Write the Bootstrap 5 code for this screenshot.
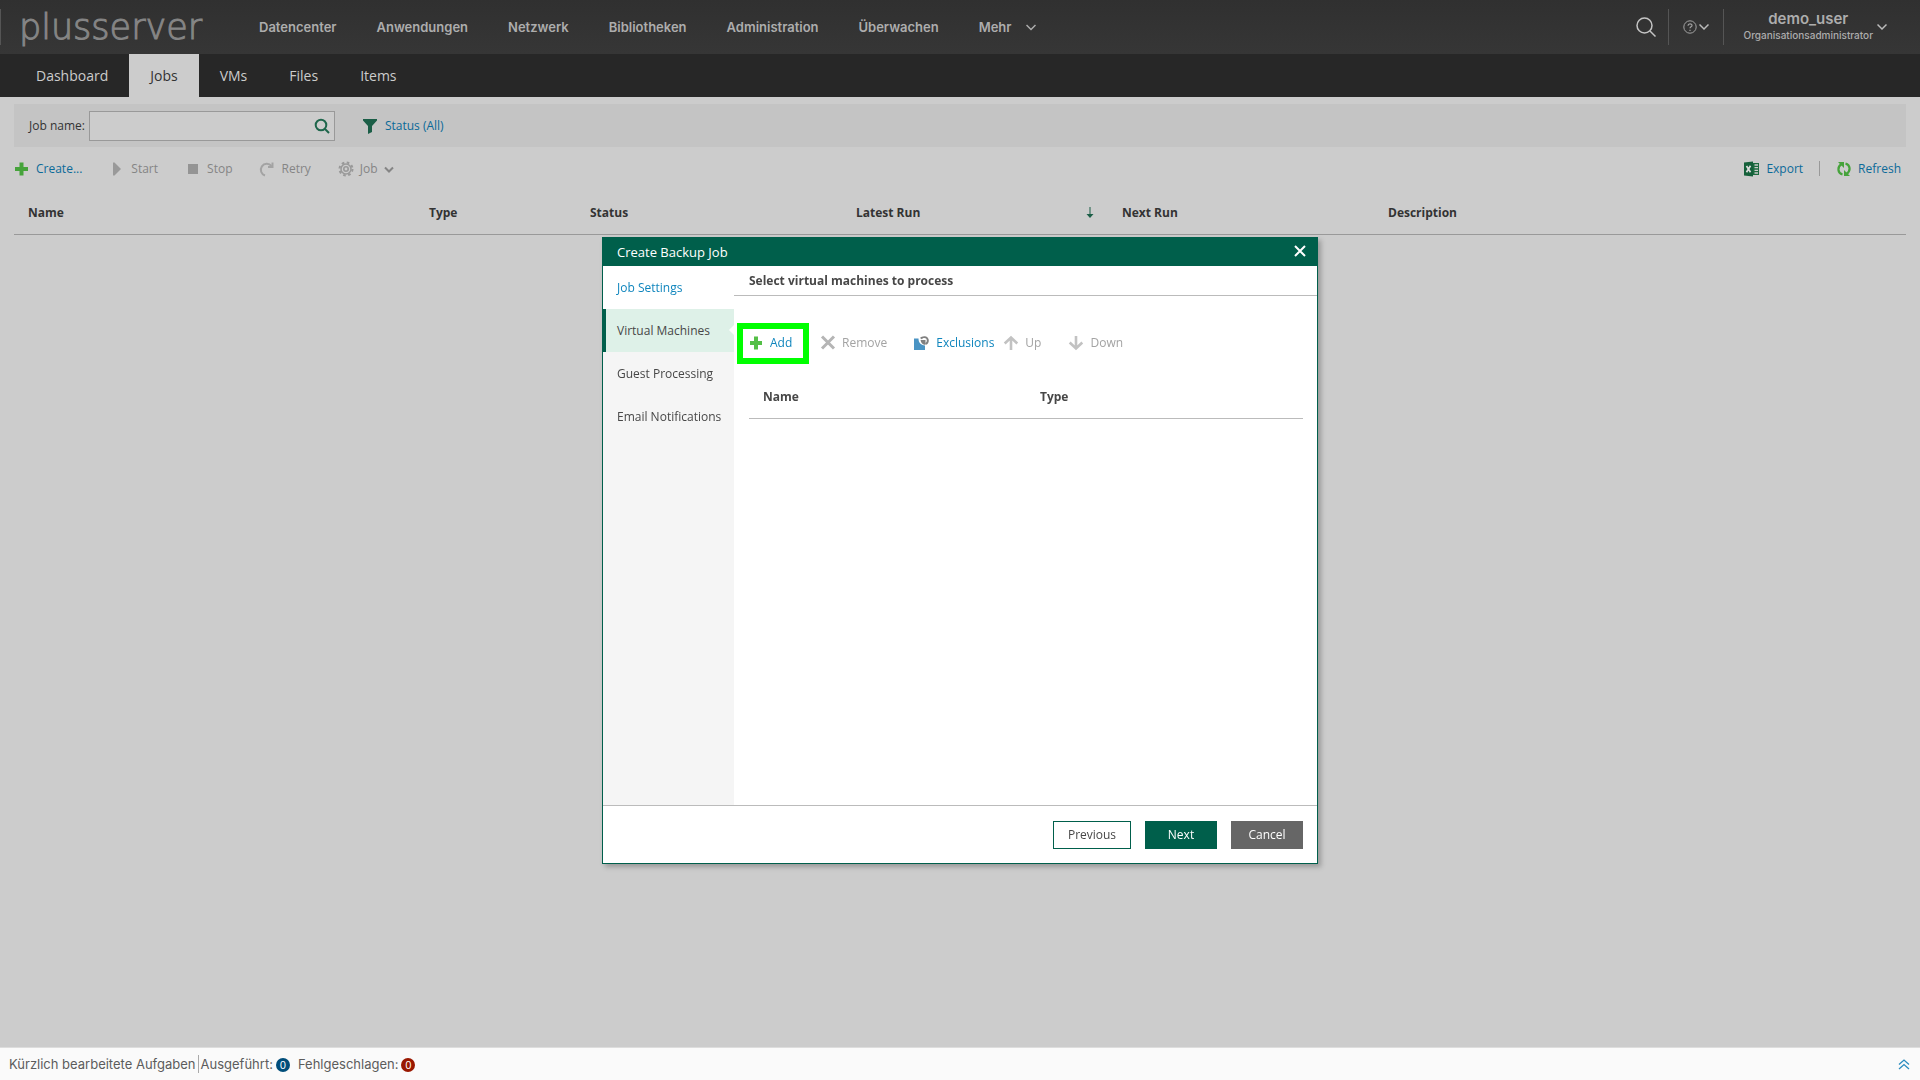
<!DOCTYPE html>
<html lang="de">
<head>
<meta charset="utf-8">
<meta name="viewport" content="width=device-width, initial-scale=1">
<title>plusserver – Jobs</title>
<link href="https://cdn.jsdelivr.net/npm/bootstrap@5.3.0/dist/css/bootstrap.min.css" rel="stylesheet">
<style>
  body { background: #ccc; color: #333; font: 12px/18px "Open Sans", "Noto Sans", sans-serif; }
  button { font: inherit; color: inherit; background: none; border: 0; padding: 0; }
  a { text-decoration: none; color: inherit; }
  svg { flex: none; display: block; }

  .brandbar { height: 54px; background: linear-gradient(#303030, #363636); color: #adadad; font-family: Inter, sans-serif; padding-right: 33px; }
  .brandbar .logo-text { font: 200 35px/40px "DejaVu Sans", sans-serif; color: #858585; width: 238px; padding-left: 18px; -webkit-text-stroke: 1px #858585; }
  .mainmenu { gap: 40px; font-size: 13px; font-weight: 600; }
  .mainmenu .more { gap: 15px; }
  .rule { width: 1px; height: 36px; background: #555; }
  .helpbtn { padding: 0 14px; gap: 2px; }
  .userbox { font-size: 10px; line-height: 14px; font-weight: 500; text-align: center; margin-left: 20px; }
  .userbox span { padding-bottom: 2px; }
  .userbox strong { display: block; font-size: 15px; line-height: 18px; font-weight: 600; }

  .tabbar { height: 43px; background: #272727; color: #ccc; font-size: 14px; padding-left: 15px; }
  .tabbar a { padding: 0 21px; line-height: 43px; }
  .tabbar a.active { background: #ccc; color: #333; }

  .workarea { padding: 7px 14px 0; }
  .filterbar { height: 43px; background: #c4c4c4; padding-left: 15px; }
  .searchbox { width: 246px; height: 30px; border: 1px solid #999; background: #ccc; }
  .searchbox input { border: 0; background: none; outline: 0; min-width: 0; padding: 0 8px; }
  .linkblue { color: #0b6a99; }
  .jobtools { height: 43px; color: #858585; gap: 27px; }
  .jobtools button, .jobtools a, .vmtools button { display: flex; align-items: center; gap: 6px; }
  .jobtools .sidetools { gap: 16px; padding-right: 5px; }
  .sidetools .rule { height: 15px; background: #999; }

  .grid { width: 100%; table-layout: fixed; }
  .grid th { height: 44px; padding: 2px 14px 0; border-bottom: 1px solid #999; }
  .grid .w-type { width: 161px; } .grid .w-run { width: 266px; } .grid .w-desc { width: 532px; }

  .wizard { width: 716px; max-width: 100%; margin: 237px auto 0; }
  .wizard .modal-content { border: 1px solid #005f4b; border-radius: 0; box-shadow: 3px 3px 5px rgba(0,0,0,.25); color: #474747; }
  .wizard .modal-header { height: 28px; background: #005f4b; color: #fff; border: 0; border-radius: 0; padding: 0 11px 0 14px; }
  .wizard h1 { font-size: 13px; line-height: 26px; font-weight: 400; margin: 0; }
  .wizard-body { height: 539px; }
  .steps { flex: none; width: 131px; background: #f5f5f5; }
  .steps a { display: block; padding-left: 14px; line-height: 43px; white-space: nowrap; }
  .steps .done { background: #fff; color: #0f85bd; }
  .steps .current { background: #def1e8; border-left: 3px solid #005f4b; padding-left: 11px; position: relative; }
  .steps .current::after { content: ""; position: absolute; right: 0; top: 16px; border: 5px solid transparent; border-right-color: #fff; border-left: 0; }
  .steptitle { font-size: 12px; line-height: 29px; font-weight: 700; padding-left: 15px; border-bottom: 1px solid #bbb; margin: 0; }
  .vmtools { padding: 33px 0 0 9px; color: #a3a3a3; }
  .vmtools button { height: 29px; padding: 0 7px 2px; margin-right: 13px; }
  .vmtools .add { width: 60px; margin-right: 10px; outline: 6px solid #0f0; }
  .vmtools .tight { padding-right: 2px; margin-right: 0; }
  .vmtools .blue { color: #0f85bd; }
  .vmtable { margin: 16px 14px 0 15px; }
  .vmtable .grid th { border-color: #bbb; width: 50%; }
  .wizard .modal-footer { height: 58px; padding: 0 14px; gap: 14px; border-top: 1px solid #bbb; border-radius: 0; }
  .wizard .modal-footer > * { margin: 0; }
  .wbtn { height: 28px; width: 72px; }
  .wbtn.prev { width: 78px; border: 1px solid #005f4b; }
  .wbtn.next { background: #005f4b; color: #fff; }
  .wbtn.cancel { background: #666; color: #fff; }

  .taskbar { height: 33px; background: #fafafa; border-top: 1px solid #ddd; color: #5c5c5c; font: 13px/18px Inter, sans-serif; padding: 0 10px 0 9px; }
  .taskbar .rule { height: 18px; margin: 0 2px; background: #aaa; }
  .count { width: 14px; height: 14px; border-radius: 7px; color: #fff; font-size: 10px; line-height: 14px; text-align: center; margin: 2px 8px 0 3px; }
  .count.ok { background: #004d7a; } .count.bad { background: #991700; }
</style>
<script src="https://cdn.jsdelivr.net/npm/bootstrap@5.3.0/dist/js/bootstrap.bundle.min.js"></script>
</head>
<body class="min-vh-100 d-flex flex-column">
<header>
  <div class="brandbar d-flex align-items-center">
    <span class="rule"></span>
    <a href="#" class="logo-text" aria-label="plusserver">plusserver</a>
    <nav class="mainmenu d-flex ms-3 ps-1" aria-label="Hauptmenü">
      <a href="#">Datencenter</a><a href="#">Anwendungen</a><a href="#">Netzwerk</a><a href="#">Bibliotheken</a><a href="#">Administration</a><a href="#">Überwachen</a>
      <a href="#" class="more d-flex align-items-center">Mehr
        <svg width="10" height="8" fill="none" stroke="currentColor" stroke-width="1.5"><path d="M.5 2 5 6.500 9.500 2"/></svg></a>
    </nav>
    <button class="ms-auto me-2 pe-1" aria-label="Suchen"><svg width="20" height="20" fill="none" stroke="#c4c4c4" stroke-width="1.500"><circle cx="8.500" cy="8.500" r="7.500"/><path d="m14 14 5.500 5.500"/></svg></button>
    <span class="rule"></span>
    <button class="helpbtn d-flex align-items-center" aria-label="Hilfe">
      <svg width="14" height="14" fill="none" stroke="#a3a3a3"><circle cx="7" cy="7" r="6.200"/><path d="M5 5.700C5 3.200 9 3.200 9 5.400 9 6.900 7 6.800 7 8.300M7 9.700v1.200" stroke-width="1.200"/></svg>
      <svg width="10" height="8" fill="none" stroke="#bbb" stroke-width="1.500"><path d="M.5 1.500 5 6 9.500 1.500"/></svg>
    </button>
    <span class="rule"></span>
    <button class="userbox d-flex align-items-center gap-1">
      <span><strong>demo_user</strong>Organisationsadministrator</span>
      <svg width="10" height="8" fill="none" stroke="#bbb" stroke-width="1.500"><path d="M.5 1.500 5 6 9.500 1.500"/></svg>
    </button>
  </div>
  <nav class="tabbar d-flex" aria-label="Bereiche">
    <a href="#">Dashboard</a><a href="#" class="active" aria-current="page">Jobs</a><a href="#">VMs</a><a href="#">Files</a><a href="#">Items</a>
  </nav>
</header>

<main class="workarea flex-grow-1">
  <div class="filterbar d-flex align-items-center">
    <label for="jobname" class="me-1">Job name:</label>
    <div class="searchbox d-flex align-items-center">
      <input id="jobname" type="text" class="flex-grow-1">
      <button class="me-1" aria-label="Suche starten"><svg width="16" height="16" fill="none" stroke="#1e664b" stroke-width="2"><circle cx="7" cy="7" r="5.300"/><path d="m11 11 4 4"/></svg></button>
    </div>
    <button class="linkblue d-flex align-items-center gap-2 ms-4 ps-1">
      <svg width="14" height="16" fill="#1b5e47"><path d="M0 1h14v1.500L9 8v6l-4 2V8L0 2.500z"/></svg>Status (All)
    </button>
  </div>
  <div class="jobtools d-flex align-items-center">
    <button class="linkblue"><svg width="16" height="16" fill="#46a33b"><path d="M5.500 1.500h4v4.500h4.500v4h-4.500v4.500h-4V10H1V6h4.500z"/></svg>Create...</button>
    <button><svg width="16" height="16" fill="#999"><path d="M4 1.500h1.500L12 8l-6.500 6.500H4z"/></svg>Start</button>
    <button><svg width="16" height="16" fill="#949494"><path d="M3 3h10v10H3z"/></svg>Stop</button>
    <button><svg width="16" height="16" fill="none" stroke="#a3a3a3" stroke-width="2"><path d="M6 14.500A6 6 0 1 1 12.500 5"/><path d="M9 6h4.500V1.500"/></svg>Retry</button>
    <button><svg width="16" height="16" fill="none" stroke="#999"><circle cx="8" cy="8" r="6.500" stroke-width="2" stroke-dasharray="2.600 2.500"/><circle cx="8" cy="8" r="5" stroke-width="1.500"/><circle cx="8" cy="8" r="2.200" stroke-width="1.600"/></svg>Job
      <svg width="10" height="8" fill="none" stroke="#858585" stroke-width="2"><path d="M1 2.500 5 6.500 9 2.500"/></svg></button>
    <div class="sidetools d-flex align-items-center ms-auto">
      <button class="linkblue"><svg width="16" height="16"><path d="M9 2h6v12H9z" fill="#1c6b3f"/><path d="M10.500 4h3.500M10.500 6.700h3.500M10.500 9.400h3.500M10.500 12h3.500" stroke="#ccc" stroke-width="1.300"/><path d="M0 1.500 9 .5v15l-9-1z" fill="#15603a"/><path d="m2.500 5 4 6.200M6.500 4.800l-4 6.500" stroke="#ddd" stroke-width="1.700"/></svg>Export</button>
      <span class="rule"></span>
      <a href="#" class="linkblue"><svg width="16" height="16" fill="none" stroke="#46a33b" stroke-width="2.200"><path d="M6.500 13.500C1.500 12 1 6 5.500 3M9.500 2.500c5 1.500 5.500 7.500 1 10.500"/><path d="M2 1h6v6zM14 15H8V9z" fill="#46a33b" stroke="none"/></svg>Refresh</a>
    </div>
  </div>
  <table class="grid">
    <thead><tr><th>Name</th><th class="w-type">Type</th><th class="w-run">Status</th>
      <th class="w-run"><span class="d-flex align-items-center justify-content-between">Latest Run<svg width="8" height="14" fill="none" stroke="#1b5e47"><path d="M4 1v9"/><path d="M.5 8h7L4 12z" fill="#1b5e47" stroke="none"/></svg></span></th>
      <th class="w-run">Next Run</th><th class="w-desc">Description</th></tr></thead>
  </table>
</main>

<div class="modal d-block" role="dialog" aria-labelledby="wizardTitle">
  <div class="modal-dialog wizard">
    <div class="modal-content">
      <div class="modal-header d-flex justify-content-between align-items-center">
        <h1 id="wizardTitle">Create Backup Job</h1>
        <button aria-label="Schließen"><svg width="12" height="14" fill="none" stroke="#fff" stroke-width="2"><path d="m1 1 10 10M11 1 1 11"/></svg></button>
      </div>
      <div class="wizard-body d-flex">
        <nav class="steps" aria-label="Schritte">
          <a href="#" class="done">Job Settings</a><a href="#" class="current" aria-current="step">Virtual Machines</a><a href="#">Guest Processing</a><a href="#">Email Notifications</a>
        </nav>
        <section class="flex-grow-1">
          <h2 class="steptitle">Select virtual machines to process</h2>
          <div class="vmtools d-flex">
            <button class="add blue"><svg width="14" height="16" fill="#54bf47"><path d="M4 1.500h4v4.500h4v4H8v4.500H4V10H0V6h4z"/></svg>Add</button>
            <button><svg width="16" height="16" stroke="#b5b5b5" stroke-width="3"><path d="m2 1.500 12 12M14 1.500l-12 12"/></svg>Remove</button>
            <button class="blue tight"><svg width="16" height="16"><path d="M0 3.500h4.500C4.500 8 7 10 11 10.500V15H0z" fill="#4a94c4"/><path d="M6 3C8 .2 14.800.2 14.800 5.500c0 2-.8 3.300-2.300 4.200L11 8.200c1.500-.8 1.800-1.700 1.800-2.700 0-3-3.600-3-5-1.200z" fill="#808080"/><path d="M6.500 5h5v5C8.500 9.500 7 8 6.500 5z" fill="#808080"/></svg>Exclusions</button>
            <button><svg width="16" height="16" fill="none" stroke="#c2c2c2" stroke-width="2.600"><path d="M8 15V3M1.700 8.500 8 2.500l6.300 6"/></svg>Up</button>
            <button><svg width="16" height="16" fill="none" stroke="#c2c2c2" stroke-width="2.600"><path d="M8 1v12M1.700 7.500l6.300 6 6.300-6"/></svg>Down</button>
          </div>
          <div class="vmtable"><table class="grid"><thead><tr><th>Name</th><th>Type</th></tr></thead></table></div>
        </section>
      </div>
      <div class="modal-footer d-flex justify-content-end">
        <button class="wbtn prev">Previous</button><button class="wbtn next">Next</button><button class="wbtn cancel">Cancel</button>
      </div>
    </div>
  </div>
</div>

<footer class="taskbar d-flex align-items-center">
  <span>Kürzlich bearbeitete Aufgaben</span><span class="rule"></span>
  <span>Ausgeführt:</span><span class="count ok">0</span>
  <span>Fehlgeschlagen:</span><span class="count bad">0</span>
  <button class="ms-auto" aria-label="Aufgaben einblenden"><svg width="12" height="12" fill="none" stroke="#2a8cbf" stroke-width="1.300"><path d="M1 6.500 6 2l5 4.500M1 11l5-4.500 5 4.500"/></svg></button>
</footer>
</body>
</html>
